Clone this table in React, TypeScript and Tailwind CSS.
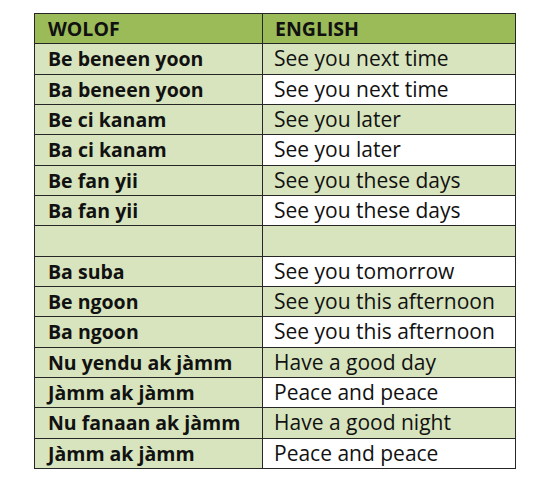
import React from "react";

const rows: [string, string][] = [
  ["Be beneen yoon", "See you next time"],
  ["Ba beneen yoon", "See you next time"],
  ["Be ci kanam", "See you later"],
  ["Ba ci kanam", "See you later"],
  ["Be fan yii", "See you these days"],
  ["Ba fan yii", "See you these days"],
  ["", ""],
  ["Ba suba", "See you tomorrow"],
  ["Be ngoon", "See you this afternoon"],
  ["Ba ngoon", "See you this afternoon"],
  ["Nu yendu ak jàmm", "Have a good day"],
  ["Jàmm ak jàmm", "Peace and peace"],
  ["Nu fanaan ak jàmm", "Have a good night"],
  ["Jàmm ak jàmm", "Peace and peace"],
];

export default function App() {
  return (
    <div className="w-[544px] h-[495px] bg-white pt-[13px] pl-[34px]" style={{ fontFamily: "'Open Sans', sans-serif" }}>
      <div className="w-[482px] h-[456px] border border-[#262626] bg-[#262626] grid grid-cols-[227px_1fr] grid-rows-[repeat(15,1fr)] gap-px leading-none text-[#111]">
        <div className="bg-[#9bbb59] flex items-center pl-[13px] font-bold text-[19.5px]">WOLOF</div>
        <div className="bg-[#9bbb59] flex items-center pl-[12px] font-bold text-[19.5px]">ENGLISH</div>
        {rows.map(([w, e], i) => (
          <React.Fragment key={i}>
            <div className="bg-[#d7e4bd] flex items-center pl-[13px] font-bold text-[19.5px]">{w}</div>
            <div className={(i % 2 === 0 ? "bg-[#d7e4bd]" : "bg-white") + " flex items-center pl-[11px] text-[21px]"}>{e}</div>
          </React.Fragment>
        ))}
      </div>
    </div>
  );
}
